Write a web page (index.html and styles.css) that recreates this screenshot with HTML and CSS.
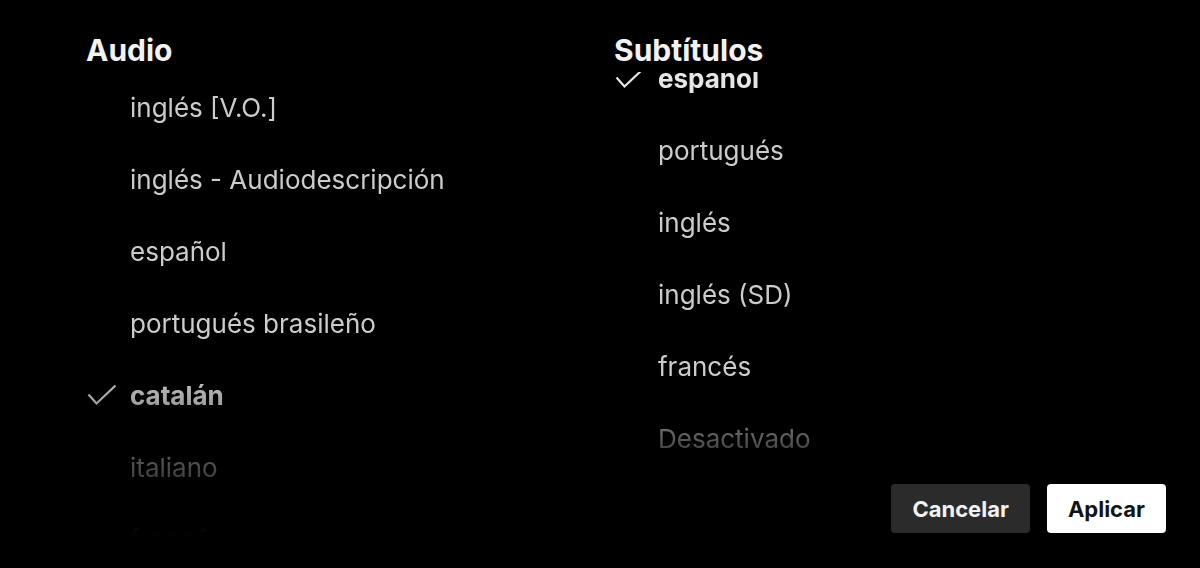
FILE: index.html
```html
<!DOCTYPE html>
<html lang="es">
<head>
<meta charset="utf-8">
<title>Audio y subtítulos</title>
<link rel="stylesheet" href="styles.css">
</head>
<body>
<div class="screen">
  <section class="col col-audio">
    <h2 class="title">Audio</h2>
    <div class="list-wrap">
      <ul class="list">
        <li class="item"><span class="check"></span><span class="label">inglés [V.O.]</span></li>
        <li class="item"><span class="check"></span><span class="label">inglés - Audiodescripción</span></li>
        <li class="item"><span class="check"></span><span class="label">español</span></li>
        <li class="item"><span class="check"></span><span class="label">portugués brasileño</span></li>
        <li class="item is-selected"><span class="check"><svg viewBox="0 0 30 22" width="30" height="22"><path d="M1.5 10.5 L9.5 19.5 L28.5 1.5" fill="none" stroke="currentColor" stroke-width="2.2"/></svg></span><span class="label">catalán</span></li>
        <li class="item"><span class="check"></span><span class="label">italiano</span></li>
        <li class="item"><span class="check"></span><span class="label">francés</span></li>
      </ul>
    </div>
  </section>
  <section class="col col-subs">
    <h2 class="title">Subtítulos</h2>
    <div class="list-wrap">
      <ul class="list list-scrolled">
        <li class="item is-selected"><span class="check"><svg viewBox="0 0 30 22" width="30" height="22"><path d="M1.5 10.5 L9.5 19.5 L28.5 1.5" fill="none" stroke="currentColor" stroke-width="2.2"/></svg></span><span class="label">español</span></li>
        <li class="item"><span class="check"></span><span class="label">portugués</span></li>
        <li class="item"><span class="check"></span><span class="label">inglés</span></li>
        <li class="item"><span class="check"></span><span class="label">inglés (SD)</span></li>
        <li class="item"><span class="check"></span><span class="label">francés</span></li>
        <li class="item"><span class="check"></span><span class="label">Desactivado</span></li>
      </ul>
    </div>
    <div class="actions">
      <button class="btn btn-secondary" type="button">Cancelar</button>
      <button class="btn btn-primary" type="button">Aplicar</button>
    </div>
  </section>
</div>
</body>
</html>
```
FILE: styles.css
```css
* { box-sizing: border-box; }
html, body {
  margin: 0;
  height: 100%;
  background: #000;
  overflow: hidden;
}
body {
  font-family: Inter, "Noto Sans", "Liberation Sans", sans-serif;
  color: #cccccc;
}
.screen {
  display: grid;
  grid-template-columns: 528px 1fr;
  height: 568px;
  padding: 0 34px 0 86px;
}
.col {
  display: flex;
  flex-direction: column;
  min-height: 0;
}
.title {
  margin: 0;
  height: 71px;
  padding-top: 35px;
  font-size: 30px;
  line-height: 1;
  font-weight: 700;
  color: #f2f2f2;
}
.list-wrap {
  flex: 1;
  min-height: 0;
  overflow: hidden;
}
.col-audio .list-wrap {
  -webkit-mask-image: linear-gradient(to bottom, #000 0, #000 275px, transparent 466px);
  mask-image: linear-gradient(to bottom, #000 0, #000 275px, transparent 466px);
}
.col-subs .list-wrap {
  margin-top: 1px;
  -webkit-mask-image: linear-gradient(to bottom, #000 0, #000 305px, transparent 414px);
  mask-image: linear-gradient(to bottom, #000 0, #000 305px, transparent 414px);
}
.list {
  list-style: none;
  margin: 0;
  padding: 0;
}
.list-scrolled {
  margin-top: -30px;
}
.item {
  display: flex;
  align-items: center;
  height: 72px;
  font-size: 26px;
}
.check {
  width: 44px;
  flex: none;
  display: flex;
  align-items: center;
  padding-left: 1px;
}
.check svg { display: block; }
.is-selected .label {
  font-weight: 700;
  color: #e6e6e6;
}
.is-selected .check { color: #e6e6e6; }
.actions {
  display: flex;
  justify-content: flex-end;
  gap: 17px;
  padding-bottom: 35px;
}
.btn {
  height: 49px;
  border: 0;
  border-radius: 4px;
  padding: 0 21px;
  font-family: inherit;
  font-size: 22px;
  font-weight: 700;
}
.btn-secondary {
  background: #2b2b2b;
  color: #f2f2f2;
}
.btn-primary {
  background: #ffffff;
  color: #141414;
}
```
